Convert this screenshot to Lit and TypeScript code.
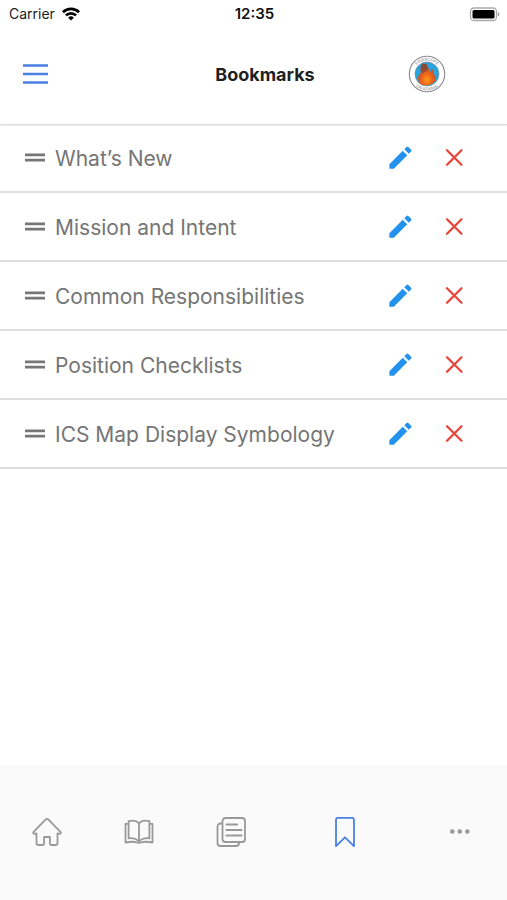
import { LitElement, html, css, svg } from "lit";
import { customElement, property } from "lit/decorators.js";
import { classMap } from "lit/directives/class-map.js";

const icons = {
  home: svg`<path d="M15 1.800c-.6 0-1 .3-1.500.8L1.600 14.800c-1 1.100.1 2.300 1.200 2L4.500 16.300v9.700c0 1.300.7 2 2 2h3.800c1.200 0 1.800-.6 1.800-1.800V20h5.800v6.200c0 1.200.6 1.800 1.800 1.800h3.800c1.300 0 2-.7 2-2v-9.700l1.700.5c1.100.3 2.200-.9 1.200-2L16.500 2.600c-.5-.5-.9-.8-1.500-.8Z"/>`,
  book: svg`<path d="M15 6.300C12.500 3.400 8 3.200 4.600 4.200V21.300c4-.5 8 .6 10.400 3.500 2.400-2.900 6.400-4 10.400-3.500V4.200C22 3.200 17.500 3.400 15 6.300V25M4.500 6.800h-3v18.700c4.500-.9 9-.9 11.500 0 1.200.5 2.800.5 4 0 2.500-.9 7-.9 11.500 0V6.800h-3"/>`,
  notes: svg`<rect x="6.500" y="1" width="22.500" height="24" rx="3"/><path d="M6.500 6.500H4.500a3 3 0 0 0-3 3V26a3 3 0 0 0 3 3H20a3 3 0 0 0 3-3v-1"/><path class="bold" d="M10.500 7.500h10.500M10.500 13h15M10.500 18.500h15"/>`,
  bookmark: svg`<path d="M8 .8h14a2 2 0 0 1 2 2V29.200l-9-8.900-9 8.900V2.800a2 2 0 0 1 2-2Z"/>`,
  more: svg`<g class="solid"><circle cx="7.300" cy="14.500" r="2.300"/><circle cx="14.800" cy="14.500" r="2.300"/><circle cx="22.300" cy="14.500" r="2.300"/></g>`,
};

@customElement("status-bar")
class StatusBar extends LitElement {
  static styles = css`
    :host {
      display: grid;
      grid-template-columns: 1fr auto 1fr;
      align-items: center;
      height: 28px;
      padding: 0 7px 0 9px;
      font: 14px/18px Inter, "Liberation Sans", sans-serif;
      color: #1c1c1c;
    }
    .carrier { display: flex; align-items: center; gap: 7px; }
    .time { font-size: 15px; font-weight: 600; color: #111; }
    .battery { justify-self: end; display: block; }
    svg { display: block; }
  `;
  render() {
    return html`
      <span class="carrier">Carrier
        <svg width="18" height="14" viewBox="0 0 18 14" fill="none" stroke="#000" stroke-width="2.700" aria-hidden="true">
          <path d="M.9 5.200a11.500 11.500 0 0 1 16.200 0M3.900 8.400a7.200 7.200 0 0 1 10.200 0"/>
          <path d="M9 13.600 6.100 10.700a4.100 4.100 0 0 1 5.800 0Z" fill="#000" stroke="none"/>
        </svg>
      </span>
      <time class="time">12:35</time>
      <svg class="battery" width="31" height="15" viewBox="0 0 31 15" role="img" aria-label="Battery full">
        <rect x="1.500" y="1" width="26" height="12.500" rx="3.500" fill="#fff" stroke="#aaa" stroke-width="1.300"/>
        <rect x="3.500" y="3" width="22" height="8.500" rx="1.500"/>
        <path d="M28.900 5.200c2 .6 2 3.500 0 4.100Z" fill="#999"/>
      </svg>`;
  }
}

@customElement("bookmark-row")
class BookmarkRow extends LitElement {
  @property() label = "";
  static styles = css`
    :host {
      display: flex;
      align-items: center;
      box-sizing: border-box;
      height: 69px;
      padding: 0 40px 0 25px;
      border-bottom: 2px solid #dfdfdf;
      font: 21px/28px Inter, "Liberation Sans", sans-serif;
      color: #757575;
    }
    .label { flex: 1; min-width: 0; padding: 2px 0 0 10px; }
    button { display: block; border: 0; padding: 0; background: none; cursor: pointer; }
    .remove { margin-left: 26px; }
    svg { display: block; }
  `;
  render() {
    return html`
      <button class="grip" aria-label="Reorder ${this.label}">
        <svg width="20" height="10" viewBox="0 0 20 10" fill="#777"><path d="M0 .5h20v2.700H0zM0 5.800h20v2.700H0z"/></svg>
      </button>
      <span class="label">${this.label}</span>
      <button aria-label="Edit ${this.label}">
        <svg width="30" height="30" viewBox="0 0 24 24" fill="#2392ee">
          <path d="M3.500 17.050V20.600h3.550L17.810 9.840l-3.650-3.650L3.500 17.050zM20.910 6.840a1 1 0 0 0 0-1.410l-2.240-2.240a1 1 0 0 0-1.410 0l-1.830 1.830 3.650 3.650 1.830-1.830z"/>
        </svg>
      </button>
      <button class="remove" aria-label="Remove ${this.label}">
        <svg width="26" height="26" viewBox="0 0 26 26" fill="none" stroke="#e8463a" stroke-width="2.300" stroke-linecap="round"><path d="m6 5.300 14.500 14.500M20.500 5.300 6 19.800"/></svg>
      </button>`;
  }
}

@customElement("app-root")
class AppRoot extends LitElement {
  static styles = css`
    :host {
      display: flex;
      flex-direction: column;
      min-height: 100vh;
      background: #fff;
      font-family: Inter, "Liberation Sans", sans-serif;
    }
    header { height: 124px; box-shadow: 0 0 2px 1px #ccc; }
    .bar {
      display: grid;
      grid-template-columns: 1fr auto 1fr;
      align-items: center;
      height: 92px;
      padding: 0 23px;
    }
    h1 { margin: 0; padding: 2px 0 0 23px; font: 700 18px/24px Inter, "Liberation Sans", sans-serif; color: #1f1f1f; }
    button { display: block; border: 0; padding: 0; background: none; cursor: pointer; }
    .menu { justify-self: start; }
    .seal { justify-self: end; margin-right: 38px; }
    svg { display: block; }
    main { flex: 1; }
    nav { display: flex; box-sizing: border-box; height: 135px; padding: 0 1px 1px; background: #fafafa; }
    .tab { flex: 2; display: flex; align-items: center; justify-content: center; color: #999; }
    .tab.active { flex: 3; color: #4a80e4; }
    .tab svg { fill: none; stroke: currentColor; stroke-width: 1.800; stroke-linejoin: round; }
    .tab .bold { stroke-width: 2.200; stroke-linecap: round; }
    .tab .solid { fill: currentColor; stroke: none; }
  `;
  bookmarks = ["What’s New", "Mission and Intent", "Common Responsibilities", "Position Checklists", "ICS Map Display Symbology"];
  tabs = [
    { name: "Home", icon: icons.home },
    { name: "Guide", icon: icons.book },
    { name: "Notes", icon: icons.notes },
    { name: "Bookmarks", icon: icons.bookmark, active: true },
    { name: "More", icon: icons.more },
  ];
  render() {
    return html`
      <header>
        <status-bar></status-bar>
        <div class="bar">
          <button class="menu" aria-label="Menu">
            <svg width="25" height="22" viewBox="0 0 25 22" stroke="#4a80e4" stroke-width="2.300"><path d="M0 2.500h25M0 11h25M0 19.500h25"/></svg>
          </button>
          <h1>Bookmarks</h1>
          <svg class="seal" width="38" height="38" viewBox="0 0 38 38" role="img" aria-label="Firescope California">
            <defs>
              <radialGradient id="flame" cx=".5" cy=".75" r=".65">
                <stop offset="0" stop-color="#ff9a16"/><stop offset=".45" stop-color="#f0631b"/><stop offset="1" stop-color="#b04a2b"/>
              </radialGradient>
              <path id="top" d="M5.500 19a13.500 13.500 0 0 1 27 0"/>
              <path id="bottom" d="M2.500 19a16.500 16.500 0 0 0 33 0"/>
            </defs>
            <circle cx="19" cy="19" r="17.700" fill="#fff" stroke="#8b8b90" stroke-width="1.100"/>
            <circle cx="19" cy="19" r="12" fill="#27a5de" stroke="#8a8794" stroke-width=".7"/>
            <path d="M12.500 29c-3.500-4-3-8.500.5-11.500-1-3-.5-6 1.500-9 1 1.500 2.500.5 4 .5.500 3 3 4.500 3.500 8 1.500-1 1.800-2.500 1.500-4 3 3.500 1.500 6 4 8.500.8 4-1 6-4 7.500-4 2-8 1.500-11 0Z" fill="url(#flame)"/>
            <path d="M14.500 8c-2.500 3-2.500 8-1 10 2.500.5 4-2 6.500-3.500-.5-2-1.500-3-1.500-6-1 .5-3 1-4-.5Z" fill="#7d4639" opacity=".7"/>
            <g font-family="Liberation Sans, sans-serif" font-size="4" fill="#77757e" text-anchor="middle">
              <text><textPath href="#top" startOffset="50%">FIRESCOPE</textPath></text>
              <text><textPath href="#bottom" startOffset="50%">CALIFORNIA</textPath></text>
            </g>
          </svg>
        </div>
      </header>
      <main>${this.bookmarks.map((b) => html`<bookmark-row label=${b}></bookmark-row>`)}</main>
      <nav aria-label="Main">
        ${this.tabs.map(
          (t) => html`<button class=${classMap({ tab: true, active: !!t.active })} aria-label=${t.name}>
            <svg width="30" height="30" viewBox="0 0 30 30">${t.icon}</svg>
          </button>`
        )}
      </nav>`;
  }
}
